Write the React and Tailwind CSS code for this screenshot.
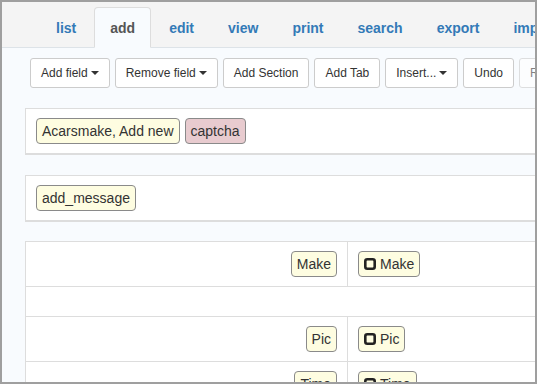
const TABS = ["list", "add", "edit", "view", "print", "search", "export", "import"]
const BUTTONS = [
  { label: "Add field", caret: true },
  { label: "Remove field", caret: true },
  { label: "Add Section" },
  { label: "Add Tab" },
  { label: "Insert...", caret: true },
  { label: "Undo" },
  { label: "Redo", disabled: true },
]

function Caret() {
  return <span className="inline-block w-0 h-0 ml-[3px] align-middle border-x-4 border-x-transparent border-t-4 border-t-[#333]" />
}

function Badge({ children, pink }) {
  return (
    <span
      className={`inline-flex items-center border border-[#8a8a8a] rounded-[4px] px-[5px] py-[2px] leading-5 text-[14px] text-[#333] ${
        pink ? "bg-[#e8cbcf]" : "bg-[#fefde1]"
      }`}
    >
      {children}
    </span>
  )
}

function Box() {
  return (
    <svg width="12" height="12" viewBox="0 0 12 12" className="mr-[4px]">
      <rect x="1.3" y="1.3" width="9.4" height="9.4" rx="2" fill="none" stroke="#222" strokeWidth="2.6" />
    </svg>
  )
}

function Row({ label, tall = true }) {
  if (!label) return <div className="h-[30px] border-b border-[#ddd]" />
  return (
    <div className="flex border-b border-[#ddd]">
      <div className="w-[322px] flex justify-end pr-[10px] pt-[9px] pb-[9px] border-r border-[#ddd]">
        <Badge>{label}</Badge>
      </div>
      <div className="flex-1 pl-[10px] pt-[9px] pb-[9px]">
        <Badge>
          <Box />
          {label}
        </Badge>
      </div>
    </div>
  )
}

export default function App() {
  return (
    <div
      className="w-[537px] h-[384px] border-2 border-[#9f9f9f] overflow-hidden bg-[#f8fbfe] text-[#333]"
      style={{ fontFamily: '"Liberation Sans", Arial, sans-serif' }}
    >
      <div className="w-[800px]">
        <div className="flex bg-[#f4f4f4] pt-[5px] pl-[38px] border-b border-[#dde3e8]">
          {TABS.map((t) => (
            <div
              key={t}
              className={`-mb-px mr-[2px] px-[15px] pt-[10px] pb-[9px] leading-5 text-[14px] font-bold border rounded-t-[4px] ${
                t === "add"
                  ? "bg-[#f8fbfe] border-[#ddd] border-b-transparent text-[#555]"
                  : "border-transparent text-[#337ab7]"
              }`}
            >
              {t}
            </div>
          ))}
        </div>

        <div className="flex gap-[5px] pl-[28px] mt-[10px]">
          {BUTTONS.map((b) => (
            <div
              key={b.label}
              className={`flex items-center h-[30px] px-[10px] bg-white border border-[#ccc] rounded-[3px] text-[12px] ${
                b.disabled ? "text-[#333] opacity-60" : "text-[#333]"
              }`}
            >
              {b.label}
              {b.caret && <Caret />}
            </div>
          ))}
        </div>

        <div className="ml-[23px] mt-[20px] flex flex-col">
          <div className="flex gap-[5px] bg-white border border-[#ddd] border-b-2 pl-[10px] pt-[9px] pb-[9px]">
            <Badge>Acarsmake, Add new</Badge>
            <Badge pink>captcha</Badge>
          </div>

          <div className="flex mt-[20px] bg-white border border-[#ddd] border-b-2 pl-[10px] pt-[9px] pb-[9px]">
            <Badge>add_message</Badge>
          </div>

          <div className="mt-[19px] bg-white border-l border-t border-[#ddd]">
            <Row label="Make" />
            <Row />
            <Row label="Pic" />
            <Row label="Time" />
          </div>
        </div>
      </div>
    </div>
  )
}
